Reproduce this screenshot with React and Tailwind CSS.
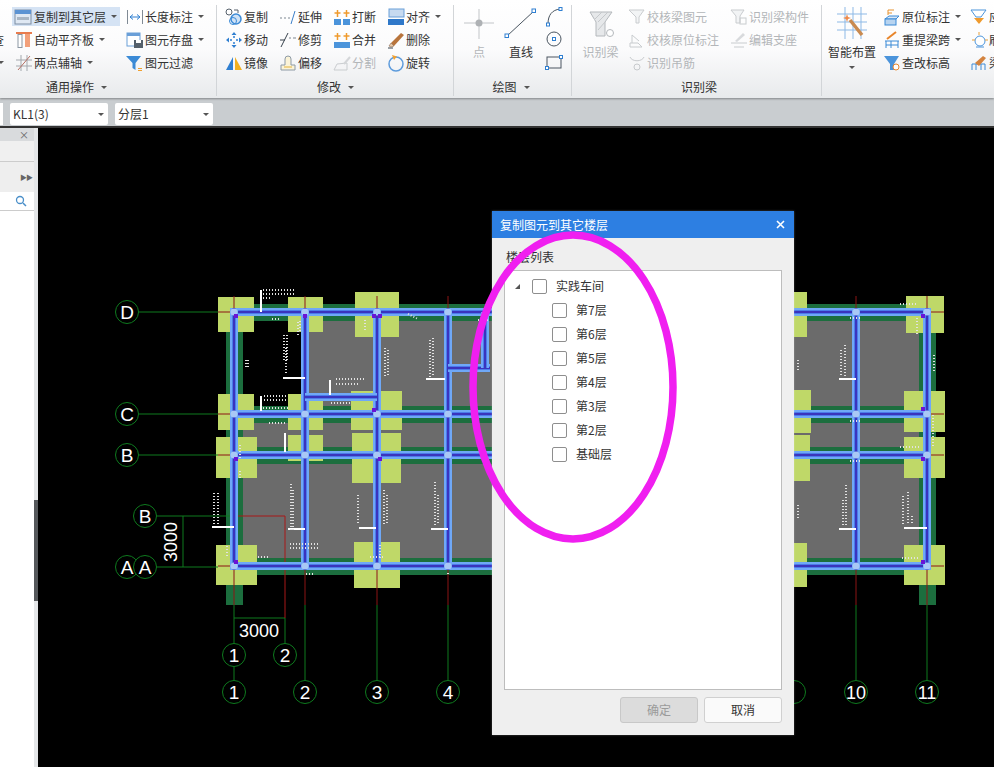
import React from 'react';

const FONT = '"Noto Sans CJK SC", "Noto Sans", sans-serif';

// ribbon icons, 18x18
const icons = {
  copyFloor: <><rect x="1" y="2" width="16" height="14" fill="#dfe8f3" stroke="#7c8ea3" /><rect x="1" y="2" width="16" height="4" fill="#5b93d3" /><rect x="3" y="9" width="12" height="3" fill="#a9b6c4" /></>,
  autoAlign: <><rect x="1" y="1" width="16" height="2" fill="#e87b4d" /><rect x="3" y="3.500" width="4" height="13" fill="#fff" stroke="#8b97a3" /><rect x="10" y="3" width="5" height="13" fill="#f2a07a" /></>,
  twoPoint: <><path d="M1 6h16M1 12h16M6 1v16M12 1v16" stroke="#a3a8ad" fill="none" /><path d="M3 16L15 2" stroke="#b56e62" fill="none" /></>,
  length: <><path d="M1.5 2v14M16.5 2v14" stroke="#808a94" /><path d="M4 9h10M4 9l3-2.5M4 9l3 2.5M14 9l-3-2.5M14 9l-3 2.5" stroke="#2f7fd1" fill="none" /></>,
  save: <><rect x="1" y="2" width="13" height="13" fill="#fff" stroke="#6a9fd8" /><rect x="1" y="2" width="13" height="3" fill="#6a9fd8" /><rect x="8" y="9" width="9" height="8" fill="#55606b" /><rect x="10" y="9" width="5" height="3" fill="#fff" /></>,
  filter: <><path d="M0 2h15l-5.500 7v7l-3-2V9z" fill="#3b8ad6" /><path d="M12 14.500h4M12 16.500h4" stroke="#f0a030" /></>,
  copy: <><circle cx="4" cy="4" r="3" fill="#fff" stroke="#56616c" /><circle cx="11" cy="11" r="5" fill="#cfe2f6" stroke="#3b8ad6" strokeWidth="1.500" /><circle cx="8" cy="13" r="3.500" fill="none" stroke="#3b8ad6" /><path d="M9 2h4v3" stroke="#56616c" fill="none" /></>,
  extend: <><path d="M1 10h2M5 10h2M9 10h2" stroke="#7c8791" /><path d="M12 16L16 3" stroke="#3b7fc9" /></>,
  breakIt: <><rect x="1" y="11" width="7" height="6" fill="#4b94db" /><rect x="10" y="11" width="7" height="6" fill="#4b94db" /><path d="M4.500 2v7M1.500 5h6M13.500 2v7M10.500 5h6" stroke="#ef9a2d" strokeWidth="1.500" /></>,
  align: <><rect x="2" y="1" width="15" height="8" fill="#c7daf0" stroke="#6a9fd8" /><rect x="1" y="11" width="16" height="6" fill="#2f78c9" /></>,
  move: <><path d="M9 1l2.500 3h-5zM9 17l2.500-3h-5zM1 9l3-2.500v5zM17 9l-3-2.500v5z" fill="#2f7fd1" /><path d="M9 5v2M9 11v2M5 9h2M11 9h2" stroke="#2f7fd1" strokeWidth="1.500" /></>,
  trim: <><path d="M2 16L9 2" stroke="#39434d" /><path d="M1 9h5" stroke="#39434d" /><path d="M10 7h2M14 7h3" stroke="#7c8791" /></>,
  merge: <><rect x="1" y="11" width="16" height="6" fill="#4b94db" /><path d="M4.500 2v7M1.500 5h6M13.500 2v7M10.500 5h6" stroke="#ef9a2d" strokeWidth="1.500" /></>,
  erase: <><path d="M1 17h5" stroke="#39434d" /><path d="M4 12L14 2l3 2L7 15z" fill="#b8743c" /><path d="M2 15l2-3 3 3-3 1z" fill="#e8c9a8" stroke="#76523a" strokeWidth=".5" /></>,
  mirror: <><path d="M1 16L8 3v13z" fill="#2f7fd1" /><path d="M10 3l7 13h-7z" fill="#f2b01f" /></>,
  offset: <><path d="M2 16v-5h4V5a3 3 0 016 0v6h4v5z" fill="#fbf3d7" stroke="#8d9aa6" /><path d="M5 13h8" stroke="#e3b23c" /></>,
  split: <><path d="M1 16h13v-7M1 16l3-6 10-1" stroke="#b9bdc1" fill="none" /><path d="M11 10l6-7" stroke="#c6c9cc" strokeWidth="2" /></>,
  rotate: <><circle cx="9" cy="10" r="7" fill="none" stroke="#5d9bdc" strokeWidth="1.500" /><path d="M5 1l5 1.500-3 3.500z" fill="#f0a030" /></>,
  checkBeam: <path d="M1 2h15l-5 7v6h-3V9z" fill="#eef0f2" stroke="#b4b8bc" />,
  checkMark: <><path d="M2 12h8l4 4H2zM4 12V4l7 6" fill="none" stroke="#b4b8bc" /></>,
  hanger: <><path d="M2 3c2 5 12 5 14 0" stroke="#b4b8bc" fill="none" /><circle cx="9" cy="13" r="3" fill="none" stroke="#b4b8bc" /></>,
  beamPart: <><path d="M1 2h13l-4 6v7H6V8z" fill="#eef0f2" stroke="#b4b8bc" /><rect x="10" y="10" width="6" height="6" fill="none" stroke="#b4b8bc" /></>,
  support: <><path d="M1 12h16M4 16h10" stroke="#b4b8bc" /><path d="M5 10l8-8 2 2-8 7z" fill="#c9ccd0" /></>,
  origin: <><path d="M2 11l4-3h10l-3 3z" fill="#d8e7f6" stroke="#3b8ad6" /><rect x="2" y="11" width="11" height="6" fill="#b8d4f0" stroke="#3b8ad6" /><path d="M5 2v5M5 2h6M5 5h4" stroke="#e6922e" fill="none" /></>,
  respan: <><path d="M2 10h14M3 10v7M8 10v7M15 10v7M3 14h12" stroke="#3b8ad6" fill="none" /><path d="M4 8L13 1" stroke="#e8852b" strokeWidth="2" /></>,
  elevation: <><path d="M1 2h15l-5 8v6H7v-6z" fill="#4b94db" /><circle cx="13" cy="13" r="3" fill="#fff" stroke="#e8852b" /></>,
  apply: <><path d="M1 2h15l-5 7H6z" fill="#fff" stroke="#4b94db" /><path d="M4 10h10l-5 6z" fill="#ef9a2d" /></>,
  refresh: <><circle cx="10" cy="10" r="5" fill="#fff" stroke="#4b94db" /><path d="M9 1v3M2 9h3M15 9h3" stroke="#e8a13c" /><path d="M6 16h8" stroke="#4b94db" /></>,
  brush: <><path d="M2 16v-6h13v6M6 10v6M11 10v6" stroke="#3b8ad6" fill="none" /><path d="M5 9l8-7 3 2-7 8z" fill="#d3833f" /></>,
};

function Icon({ name, disabled }) {
  return (
    <span className="w-[19px] shrink-0 flex items-center">
      <svg width="18" height="18" viewBox="0 0 18 18" className={disabled ? 'opacity-70' : ''}>{icons[name]}</svg>
    </span>
  );
}

function Caret({ className = '' }) {
  return <span className={`inline-block w-0 h-0 border-x-[3px] border-x-transparent border-t-[3px] border-t-[#555] ${className}`} />;
}

function Tool({ icon, label, arrow, disabled, active }) {
  return (
    <div className={`flex items-center whitespace-nowrap ${active ? 'bg-[#d5e3f4] pl-[2px] h-[19px] my-[2px]' : 'h-[23px]'} ${disabled ? 'text-[#b3b6b9]' : 'text-[#333]'}`}>
      <Icon name={icon} disabled={disabled} />
      <span className={active ? 'ml-px' : ''}>{label}</span>
      {arrow && <Caret className="ml-[5px]" />}
    </div>
  );
}

function Group({ label, caret, className, labelClass = '', children }) {
  return (
    <div className={`shrink-0 flex flex-col relative ${className}`}>
      <div className="h-[77px] pt-[5px] flex">{children}</div>
      <div className={`h-[20px] flex items-center justify-center gap-[7px] text-[#333] ${labelClass}`}>
        {label}
        {caret && <Caret />}
      </div>
      <div className="absolute right-0 top-[5px] bottom-[2px] w-px bg-[#d2d5d8]" />
    </div>
  );
}

function Ribbon() {
  return (
    <div className="h-[98px] flex text-[12px] leading-none bg-linear-to-b from-white via-[#fbfbfc] to-[#e8eaec] overflow-hidden shadow-[0_1px_2px_rgba(0,0,0,.35)] relative z-10">
      <Group label="通用操作" caret labelClass="pr-[64px]" className="w-[217px]">
        <div className="w-[12px] overflow-hidden text-[#333]">
          <div className="h-[23px]" />
          <div className="h-[23px] flex items-center -ml-[8px]">查</div>
          <div className="h-[23px] flex items-center -ml-[2px]"><Caret /></div>
        </div>
        <div className="w-[114px] pr-[6px]">
          <Tool icon="copyFloor" label="复制到其它层" arrow active />
          <div className="pl-[3px]"><Tool icon="autoAlign" label="自动平齐板" arrow /></div>
          <div className="pl-[3px]"><Tool icon="twoPoint" label="两点辅轴" arrow /></div>
        </div>
        <div>
          <Tool icon="length" label="长度标注" arrow />
          <Tool icon="save" label="图元存盘" arrow />
          <Tool icon="filter" label="图元过滤" />
        </div>
      </Group>

      <Group label="修改" caret className="w-[237px]">
        <div className="w-[62px] pl-[8px]">
          <Tool icon="copy" label="复制" />
          <Tool icon="move" label="移动" />
          <Tool icon="mirror" label="镜像" />
        </div>
        <div className="w-[54px]">
          <Tool icon="extend" label="延伸" />
          <Tool icon="trim" label="修剪" />
          <Tool icon="offset" label="偏移" />
        </div>
        <div className="w-[54px]">
          <Tool icon="breakIt" label="打断" />
          <Tool icon="merge" label="合并" />
          <Tool icon="split" label="分割" disabled />
        </div>
        <div>
          <Tool icon="align" label="对齐" arrow />
          <Tool icon="erase" label="删除" />
          <Tool icon="rotate" label="旋转" />
        </div>
      </Group>

      <Group label="绘图" caret labelClass="pr-[4px]" className="w-[118px]">
        <div className="w-[40px] ml-[5px] flex flex-col items-center text-[#b3b6b9]">
          <svg width="30" height="32" viewBox="0 0 30 32" className="mt-[3px]">
            <path d="M15 1v30M0 15h30" stroke="#c2c5c8" />
            <circle cx="15" cy="15" r="3.500" fill="#aeb1b4" />
          </svg>
          <span className="mt-[6px]">点</span>
        </div>
        <div className="w-[44px] flex flex-col items-center text-[#333]">
          <svg width="34" height="32" viewBox="0 0 34 32" className="mt-[3px]">
            <path d="M3 28L30 3" stroke="#4a5560" />
            <rect x="1" y="26" width="3.500" height="3.500" fill="#fff" stroke="#2f7fd1" />
            <rect x="28" y="1" width="3.500" height="3.500" fill="#fff" stroke="#2f7fd1" />
          </svg>
          <span className="mt-[6px]">直线</span>
        </div>
        <div className="ml-[2px] flex flex-col">
          <svg width="18" height="23" viewBox="0 0 18 23"><path d="M3 19C3 10 7 5 15 4" fill="none" stroke="#4a5560" /><rect x="1.500" y="18" width="3" height="3" fill="#fff" stroke="#2f7fd1" /><rect x="14" y="2.500" width="3" height="3" fill="#fff" stroke="#2f7fd1" /></svg>
          <svg width="18" height="23" viewBox="0 0 18 23"><circle cx="9" cy="11" r="7" fill="none" stroke="#4a5560" /><rect x="7.500" y="9.500" width="3" height="3" fill="#fff" stroke="#2f7fd1" /></svg>
          <svg width="18" height="23" viewBox="0 0 18 23"><rect x="2" y="6" width="14" height="11" fill="none" stroke="#4a5560" /><rect x="14.500" y="4.500" width="3" height="3" fill="#fff" stroke="#2f7fd1" /><rect x="0.500" y="15.500" width="3" height="3" fill="#fff" stroke="#2f7fd1" /></svg>
        </div>
      </Group>

      <Group label="识别梁" labelClass="pl-[4px]" className="w-[250px]">
        <div className="w-[55px] ml-[1px] flex flex-col items-center text-[#b3b6b9]">
          <svg width="34" height="34" viewBox="0 0 34 34" className="mt-[1px]">
            <path d="M6 6h22l-7 10v14h-9V16z" fill="#e6e8ea" stroke="#b4b8bc" />
            <path d="M10 14L18 6M14 16L24 6M14 24l7-8" stroke="#c5c8cb" />
            <circle cx="26" cy="27" r="3.500" fill="#fff" stroke="#b4b8bc" />
          </svg>
          <span className="mt-[6px]">识别梁</span>
        </div>
        <div className="w-[102px]">
          <Tool icon="checkBeam" label="校核梁图元" disabled />
          <Tool icon="checkMark" label="校核原位标注" disabled />
          <Tool icon="hanger" label="识别吊筋" disabled />
        </div>
        <div>
          <Tool icon="beamPart" label="识别梁构件" disabled />
          <Tool icon="support" label="编辑支座" disabled />
        </div>
      </Group>

      <Group className="w-[200px]">
        <div className="w-[54px] ml-[3px] flex flex-col items-center text-[#333]">
          <svg width="32" height="34" viewBox="0 0 32 34" className="mt-[1px]">
            <path d="M1 8h30M1 16h30M1 24h30M9 1v32M17 1v32M25 1v32" stroke="#8db9e6" />
            <path d="M14 14l12 15" stroke="#c98a4f" strokeWidth="3.500" />
            <path d="M11 8l1 3 3 1-3 1-1 3-1-3-3-1 3-1z" fill="#ef8a4a" />
          </svg>
          <span className="mt-[6px]">智能布置</span>
          <Caret className="mt-[8px]" />
        </div>
        <div className="w-[87px] ml-[4px]">
          <Tool icon="origin" label="原位标注" arrow />
          <Tool icon="respan" label="重提梁跨" arrow />
          <Tool icon="elevation" label="查改标高" />
        </div>
        <div>
          <Tool icon="apply" label="应用" />
          <Tool icon="refresh" label="刷新" />
          <Tool icon="brush" label="梁" />
        </div>
      </Group>
    </div>
  );
}

function Combo({ label, className = '' }) {
  return (
    <div className={`w-[98px] h-[22px] bg-white rounded-[2px] flex items-center justify-between pl-[3px] pr-[4px] text-[12px] text-[#333] ${className}`}>
      {label}
      <Caret />
    </div>
  );
}

function Toolbar() {
  return (
    <div className="h-[30px] pt-[4px] bg-[#c9cdd0] flex items-center gap-[7px] border-b-[2px] border-[#333] overflow-hidden">
      <div className="w-[3px] h-[22px] bg-white" />
      <Combo label="KL1(3)" />
      <Combo label="分层1" />
    </div>
  );
}

function LeftPanel() {
  return (
    <div className="w-[38px] shrink-0 flex relative bg-white">
      <div className="w-[34px] flex flex-col">
        <div className="h-[13px] bg-[#d9dbdd] flex items-center justify-end pr-[5px] text-[10px] leading-none text-[#666]">×</div>
        <div className="h-[21px] bg-[#f0f0f0] border-b border-[#ccc]" />
        <div className="h-[30px] bg-[#eeeeee] flex items-center justify-end text-[7px] text-[#666] tracking-[-1px] pr-[2px]">▶▶</div>
        <div className="h-[19px] bg-white border-b border-[#ccc] flex items-center justify-end pr-[7px]">
          <svg width="12" height="12" viewBox="0 0 12 12"><circle cx="5" cy="5" r="3.500" fill="none" stroke="#4a8fc9" strokeWidth="1.300" /><path d="M8 8l3 3" stroke="#4a8fc9" strokeWidth="1.500" /></svg>
        </div>
      </div>
      <div className="w-[4px] bg-[#e4e6e8] relative">
        <div className="absolute left-0 top-[372px] w-[4px] h-[101px] bg-[#55585b]" />
      </div>
    </div>
  );
}

// --- drawing data, in page coordinates ---
const axisX = [234, 305, 377, 448, 856, 927];
const axisY = [312, 414, 455, 566];

const columns = [
  [218, 297, 36, 35], [288, 297, 35, 35], [355, 292, 44, 45],
  [218, 394, 36, 36], [288, 394, 35, 36], [351, 391, 51, 39],
  [216, 437, 41, 41], [288, 435, 35, 26], [352, 433, 49, 50],
  [216, 545, 41, 40], [354, 542, 46, 46],
  [794, 292, 13, 45], [794, 390, 17, 43], [794, 435, 16, 46], [794, 543, 13, 44],
  [906, 296, 38, 37], [904, 391, 41, 41], [904, 437, 41, 41], [904, 545, 41, 40],
];

const whiteBars = [
  [426, 379, 445, 379], [283, 378, 305, 378], [212, 527, 234, 527], [288, 529, 305, 529], [359, 528, 376, 528],
  [431, 529, 448, 529], [839, 379, 856, 379], [839, 529, 856, 529], [904, 528, 927, 528],
  [261, 290, 261, 312], [261, 396, 261, 411], [285, 433, 285, 452], [330, 380, 330, 395],
];

const specks = [
  [263, 290, 296, 290], [263, 294, 296, 294], [263, 298, 272, 298], [264, 396, 286, 396], [264, 400, 286, 400],
  [284, 335, 284, 362], [287, 335, 287, 362], [286, 348, 286, 375], [246, 360, 246, 368], [248, 360, 248, 368],
  [385, 348, 385, 378], [388, 350, 388, 376], [430, 340, 430, 378], [433, 338, 433, 376],
  [336, 379, 364, 379], [336, 384, 360, 384], [331, 403, 350, 403], [272, 319, 280, 319],
  [269, 423, 285, 423], [300, 321, 300, 332], [298, 322, 298, 335], [365, 320, 365, 332], [263, 408, 290, 408],
  [291, 484, 291, 530], [293, 490, 293, 530], [358, 495, 358, 525], [384, 490, 384, 525], [387, 495, 387, 525],
  [435, 482, 435, 525], [438, 495, 438, 525], [214, 493, 214, 525], [218, 493, 218, 525],
  [290, 544, 318, 544], [290, 548, 318, 548], [268, 557, 256, 557], [370, 557, 385, 557], [380, 545, 380, 558],
  [240, 445, 240, 460], [240, 471, 240, 478], [227, 546, 227, 556], [306, 574, 313, 574], [448, 573, 448, 576],
  [841, 350, 841, 376], [845, 345, 845, 376], [843, 500, 843, 526], [846, 485, 846, 526], [903, 496, 903, 525],
  [908, 492, 908, 525], [912, 516, 912, 525], [850, 318, 862, 318], [850, 461, 862, 461], [850, 421, 862, 421],
  [900, 304, 918, 304], [900, 447, 920, 447], [902, 558, 920, 558], [934, 355, 934, 372], [933, 415, 933, 447],
  [917, 318, 917, 336], [798, 360, 798, 370], [798, 505, 798, 518], [408, 314, 418, 319], [478, 320, 488, 320],
];

const circles = [
  [127, 312, 'D'], [127, 414, 'C'], [127, 455, 'B'], [145, 516, 'B'], [127, 567, 'A'], [145, 567, 'A'],
  [234, 655, '1'], [285, 655, '2'], [234, 692, '1'], [305, 692, '2'], [377, 692, '3'], [448, 692, '4'],
  [794, 692, ''], [856, 692, '10'], [927, 692, '11'],
];

function Beam({ x1, y1, x2, y2 }) {
  return (
    <g>
      <line x1={x1} y1={y1} x2={x2} y2={y2} stroke="#6fa8f7" strokeWidth="8" />
      <line x1={x1} y1={y1} x2={x2} y2={y2} stroke="#2a4fe0" strokeWidth="3" />
      <line x1={x1} y1={y1} x2={x2} y2={y2} stroke="#4a1a9a" strokeWidth="1" />
    </g>
  );
}

function CadDrawing() {
  return (
    <svg width="956" height="639" viewBox="38 128 956 639" className="block" fontFamily='"Liberation Sans", sans-serif'>
      {/* slabs */}
      <rect x="305" y="320" width="622" height="87" fill="#6b6b6b" />
      <rect x="243" y="422" width="684" height="25" fill="#6b6b6b" />
      <rect x="243" y="463" width="684" height="95" fill="#6b6b6b" />
      {/* walls */}
      {[312, 414, 455, 566].map(y => <rect key={y} x="226" y={y - 8} width="710" height="17" fill="#1c6e3e" />)}
      <rect x="226" y="304" width="17" height="301" fill="#1c6e3e" />
      <rect x="919" y="304" width="17" height="301" fill="#1c6e3e" />
      {columns.map(([x, y, w, h]) => <rect key={`${x}-${y}`} x={x} y={y} width={w} height={h} fill="#bfd868" />)}
      {/* axis lines */}
      {axisX.map(x => <line key={x} x1={x} y1="296" x2={x} y2="605" stroke="#8c1414" />)}
      {axisX.map(x => <line key={x} x1={x} y1="605" x2={x} y2="681" stroke="#0e7a1e" />)}
      {axisY.map(y => <line key={y} x1="218" y1={y} x2="234" y2={y} stroke="#8c1414" />)}
      {axisY.map(y => <line key={y} x1="927" y1={y} x2="944" y2={y} stroke="#8c1414" />)}
      <path d="M138 312H218M138 414H218M138 455H218M156 567H218M156 516H234M183 516V567M234 618H285M285 618V644" fill="none" stroke="#0e7a1e" />
      <path d="M234 516H285V618" fill="none" stroke="#a81818" />
      {/* beams */}
      {axisY.map(y => <Beam key={y} x1={230} y1={y} x2={931} y2={y} />)}
      {axisX.map(x => <Beam key={x} x1={x} y1={308} x2={x} y2={570} />)}
      <Beam x1={305} y1={397} x2={377} y2={397} />
      <Beam x1={448} y1={368} x2={490} y2={368} />
      <Beam x1={485} y1={312} x2={485} y2={368} />
      {axisX.flatMap(x => axisY.map(y => <circle key={`${x}-${y}`} cx={x} cy={y} r="3.500" fill="#a9c8f5" />))}
      {[[236, 316], [305, 316], [374, 316], [380, 316], [923, 316], [923, 409], [923, 459], [923, 562], [236, 459], [374, 410], [380, 459], [236, 562]].map(([x, y]) => (
        <rect key={`${x}-${y}`} x={x - 2} y={y - 2} width="4" height="4" fill="#6a14d6" />
      ))}
      {/* annotation marks */}
      {whiteBars.map(([a, b, c, d]) => <line key={`${a}-${b}`} x1={a} y1={b} x2={c} y2={d} stroke="#fff" strokeWidth="2" />)}
      {specks.map(([a, b, c, d]) => <line key={`${a}-${b}-${c}`} x1={a} y1={b} x2={c} y2={d} stroke="#e2e2e2" strokeWidth="2" strokeDasharray="1 2" />)}
      {circles.map(([x, y, t]) => (
        <g key={`${x}-${y}`}>
          <circle cx={x} cy={y} r="11.500" fill="#000" stroke="#0e7a1e" />
          <text x={x} y={y + 7} textAnchor="middle" fontSize={t.length > 1 ? 18 : 19} fill="#fff">{t}</text>
        </g>
      ))}
      <text x="259" y="637" textAnchor="middle" fontSize="18" fill="#fff">3000</text>
      <text transform="translate(177 542) rotate(-90)" textAnchor="middle" fontSize="18" fill="#fff">3000</text>
    </svg>
  );
}

const floors = ['第7层', '第6层', '第5层', '第4层', '第3层', '第2层', '基础层'];

function Checkbox() {
  return <span className="w-[15px] h-[15px] shrink-0 bg-white border border-[#8e8e8e] rounded-[2px]" />;
}

function CopyDialog() {
  return (
    <div className="absolute left-[454px] top-[83px] w-[302px] h-[524px] bg-[#efefef] flex flex-col text-[12px] leading-none text-[#333] shadow-[0_0_2px_rgba(255,255,255,.3)]">
      <div className="h-[27px] shrink-0 bg-[#2d7fe2] text-white flex items-center justify-between pl-[8px] pr-[9px]">
        复制图元到其它楼层
        <svg width="9" height="9" viewBox="0 0 9 9"><path d="M1 1l7 7M8 1l-7 7" stroke="#fff" strokeWidth="1.600" /></svg>
      </div>
      <div className="h-[32px] shrink-0 flex items-center pl-[14px] pt-[6px]">楼层列表</div>
      <div className="mx-[12px] h-[420px] bg-white border border-[#bdbdbd] pt-[3px]">
        <div className="h-[24px] flex items-center pl-[10px]">
          <span className="w-0 h-0 border-l-[5px] border-l-transparent border-b-[5px] border-b-[#555] mr-[12px]" />
          <Checkbox />
          <span className="ml-[9px]">实践车间</span>
        </div>
        {floors.map(f => (
          <div key={f} className="h-[24px] flex items-center pl-[47px]">
            <Checkbox />
            <span className="ml-[9px]">{f}</span>
          </div>
        ))}
      </div>
      <div className="flex justify-end gap-[6px] mt-[7px] mr-[12px]">
        <div className="w-[78px] h-[26px] bg-[#dcdcdc] border border-[#c8c8c8] rounded-[3px] flex items-center justify-center text-[#9a9a9a]">确定</div>
        <div className="w-[78px] h-[26px] bg-[#fafafa] border border-[#d0d0d0] rounded-[3px] flex items-center justify-center">取消</div>
      </div>
    </div>
  );
}

export default function App() {
  return (
    <div className="w-[994px] h-[767px] flex flex-col overflow-hidden bg-black" style={{ fontFamily: FONT }}>
      <Ribbon />
      <Toolbar />
      <div className="flex-1 flex min-h-0">
        <LeftPanel />
        <div className="flex-1 relative bg-black overflow-hidden">
          <CadDrawing />
          <CopyDialog />
          {/* hand drawn marker ring over the dialog */}
          <svg width="956" height="639" viewBox="38 128 956 639" className="absolute inset-0 pointer-events-none">
            <ellipse cx="573" cy="387" rx="100" ry="152" fill="none" stroke="#f01ff0" strokeWidth="7.500" />
          </svg>
        </div>
      </div>
    </div>
  );
}
